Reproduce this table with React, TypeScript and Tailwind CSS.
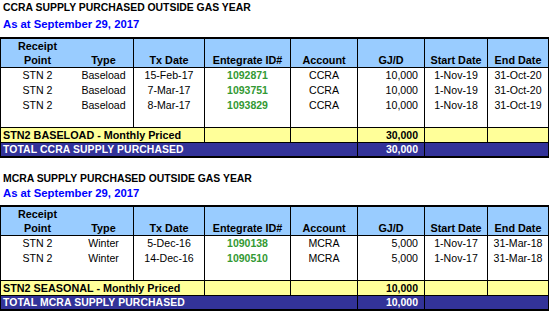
import React from "react";

type Row = { pt: string; type: string; tx: string; id: string; acct: string; gj: string; start: string; end: string };

const ccra: Row[] = [
  { pt: "STN 2", type: "Baseload", tx: "15-Feb-17", id: "1092871", acct: "CCRA", gj: "10,000", start: "1-Nov-19", end: "31-Oct-20" },
  { pt: "STN 2", type: "Baseload", tx: "7-Mar-17", id: "1093751", acct: "CCRA", gj: "10,000", start: "1-Nov-19", end: "31-Oct-20" },
  { pt: "STN 2", type: "Baseload", tx: "8-Mar-17", id: "1093829", acct: "CCRA", gj: "10,000", start: "1-Nov-18", end: "31-Oct-19" },
];

const mcra: Row[] = [
  { pt: "STN 2", type: "Winter", tx: "5-Dec-16", id: "1090138", acct: "MCRA", gj: "5,000", start: "1-Nov-17", end: "31-Mar-18" },
  { pt: "STN 2", type: "Winter", tx: "14-Dec-16", id: "1090510", acct: "MCRA", gj: "5,000", start: "1-Nov-17", end: "31-Mar-18" },
];

function Table({ rows, subtotalLabel, totalLabel, total }: { rows: Row[]; subtotalLabel: string; totalLabel: string; total: string }) {
  return (
    <div className="w-[549px] border-x border-y-2 border-black">
      <div className="grid grid-cols-[69px_63px_71px_86px_67px_67px_63px_61px] h-[29px] border-b border-black bg-[#99ccff] font-bold text-[10.8px] leading-[14px] text-black">
        <div className="flex flex-col items-center justify-end pl-[4px]">
          <span>Receipt</span>
          <span>Point</span>
        </div>
        <div className="flex flex-col items-center justify-end pl-[4px]">Type</div>
        <div className="flex flex-col items-center justify-end border-l border-black">Tx Date</div>
        <div className="flex flex-col items-center justify-end border-l border-black">Entegrate ID#</div>
        <div className="flex flex-col items-center justify-end border-l border-black">Account</div>
        <div className="flex flex-col items-center justify-end border-l border-black">GJ/D</div>
        <div className="flex flex-col items-center justify-end border-l border-black whitespace-nowrap">Start Date</div>
        <div className="flex flex-col items-center justify-end border-l border-black whitespace-nowrap">End Date</div>
      </div>
      {rows.map((r) => (
        <div key={r.id} className="grid grid-cols-[69px_63px_71px_86px_67px_67px_63px_61px] h-[15px] leading-[15px] text-[10.6px] text-black">
          <div className="text-center pl-[4px]">{r.pt}</div>
          <div className="text-center pl-[4px]">{r.type}</div>
          <div className="text-center border-l border-black">{r.tx}</div>
          <div className="text-center border-l border-black font-bold text-[10.5px] text-[#339933]">{r.id}</div>
          <div className="text-center border-l border-black">{r.acct}</div>
          <div className="text-right pr-[6px] border-l border-black">{r.gj}</div>
          <div className="text-center border-l border-black">{r.start}</div>
          <div className="text-center border-l border-black">{r.end}</div>
        </div>
      ))}
      <div className="grid grid-cols-[69px_63px_71px_86px_67px_67px_63px_61px] h-[14px]">
        <div />
        <div />
        <div className="border-l border-black" />
        <div className="border-l border-black" />
        <div className="border-l border-black" />
        <div className="border-l border-black" />
        <div className="border-l border-black" />
        <div className="border-l border-black" />
      </div>
      <div className="grid grid-cols-[69px_63px_71px_86px_67px_67px_63px_61px] h-[15px] border-t border-black bg-[#ffff99] leading-[14px] font-bold text-black">
        <div className="col-span-3 pl-[2px] whitespace-nowrap text-[10.8px]">{subtotalLabel}</div>
        <div className="border-l border-black" />
        <div className="border-l border-black" />
        <div className="border-l border-black text-right pr-[6px] text-[10.5px]">{total}</div>
        <div className="border-l border-black" />
        <div className="border-l border-black" />
      </div>
      <div className="grid grid-cols-[69px_63px_71px_86px_67px_67px_63px_61px] h-[14px] border-t border-black bg-[#333399] leading-[13px] font-bold text-white">
        <div className="col-span-5 pl-[2px] whitespace-nowrap text-[10.4px] tracking-[0.1px]">{totalLabel}</div>
        <div className="border-l border-black text-right pr-[6px] text-[10.5px]">{total}</div>
        <div className="col-span-2 border-l border-black" />
      </div>
    </div>
  );
}

export default function App() {
  return (
    <div className="w-[550px] h-[312px] bg-white font-['Liberation_Sans',Arial,sans-serif] overflow-hidden">
      <div className="pl-[3px] h-[15px] leading-[15px] text-[10.4px] font-bold text-black whitespace-nowrap">CCRA SUPPLY PURCHASED OUTSIDE GAS YEAR</div>
      <div className="pl-[3px] h-[18px] leading-[18px] text-[11.3px] font-bold text-[#0000ff] whitespace-nowrap">As at September 29, 2017</div>
      <div className="mt-[4px]">
        <Table rows={ccra} subtotalLabel="STN2 BASELOAD - Monthly Priced" totalLabel="TOTAL CCRA SUPPLY PURCHASED" total="30,000" />
      </div>
      <div className="mt-[13px] pl-[3px] h-[15px] leading-[15px] text-[10.4px] font-bold text-black whitespace-nowrap">MCRA SUPPLY PURCHASED OUTSIDE GAS YEAR</div>
      <div className="pl-[3px] h-[15px] leading-[15px] text-[11.3px] font-bold text-[#0000ff] whitespace-nowrap">As at September 29, 2017</div>
      <div className="mt-[4px]">
        <Table rows={mcra} subtotalLabel="STN2 SEASONAL - Monthly Priced" totalLabel="TOTAL MCRA SUPPLY PURCHASED" total="10,000" />
      </div>
    </div>
  );
}
